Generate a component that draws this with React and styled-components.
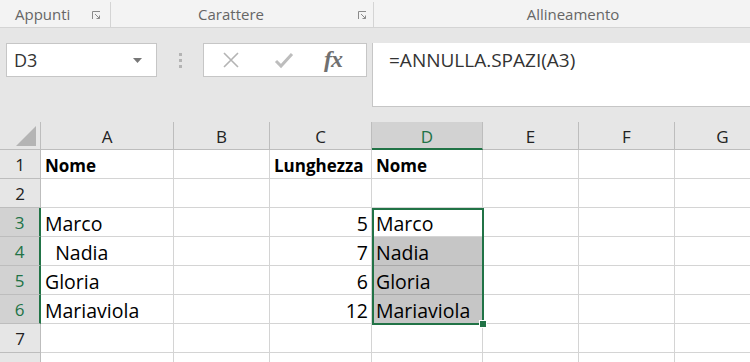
import React from 'react'
import styled, { createGlobalStyle } from 'styled-components'

const GlobalStyle = createGlobalStyle`
    html, body {
        margin: 0;
        padding: 0;
        background: #e6e6e6;
        overflow: hidden;
    }
    #root {
        width: 750px;
        height: 362px;
        overflow: hidden;
    }
`;

const green = '#217346';
const uiFont = `"Open Sans", "Noto Sans", "DejaVu Sans", sans-serif`;
const cellFont = `"Open Sans", "Noto Sans", "Liberation Sans", sans-serif`;

const cols = [41, 133, 96, 102, 111, 96, 96, 96];
const letters = ['A', 'B', 'C', 'D', 'E', 'F', 'G'];

const Page = styled.div`
    width: 750px;
    height: 362px;
    display: flex;
    flex-direction: column;
    background: #e6e6e6;
    overflow: hidden;
    & > * {
        flex: none;
    }
`;

const Ribbon = styled.div`
    height: 27px;
    display: flex;
    background: #f3f3f3;
    border-bottom: 1px solid #d4d4d4;
`;

const Group = styled.div`
    width: ${p => p.$w}px;
    flex: none;
    display: flex;
    align-items: center;
    justify-content: ${p => p.$left ? 'flex-start' : 'center'};
    padding-left: ${p => p.$pl || 0}px;
    padding-right: ${p => p.$pr || 0}px;
    box-sizing: border-box;
    position: relative;
    border-right: ${p => p.$sep ? '1px solid #d4d4d4' : 'none'};
    height: 25px;
    margin-top: 2px;
`;

const GroupLabel = styled.span`
    font-family: ${uiFont};
    font-size: 15px;
    color: #666;
    padding-bottom: 1px;
`;

const Launcher = styled.svg`
    position: absolute;
    right: ${p => p.$r}px;
    top: 9px;
`;

const FormulaBar = styled.div`
    display: flex;
    padding: 15px 0 0 6px;
    height: 79px;
    box-sizing: border-box;
`;

const NameBox = styled.div`
    width: 151px;
    height: 34px;
    box-sizing: border-box;
    background: #fff;
    border: 1px solid #c6c6c6;
    display: flex;
    align-items: center;
    justify-content: space-between;
    padding: 0 14px 0 7px;
    font-family: ${uiFont};
    font-size: 18px;
    color: #333;
`;

const Dots = styled.div`
    width: 46px;
    height: 34px;
    display: flex;
    flex-direction: column;
    align-items: center;
    justify-content: center;
    gap: 3px;
    span {
        width: 3px;
        height: 3px;
        background: #b4b4b4;
    }
`;

const FxBox = styled.div`
    width: 164px;
    height: 34px;
    box-sizing: border-box;
    background: #fff;
    border: 1px solid #c6c6c6;
    display: flex;
    align-items: center;
    padding-left: 18px;
    gap: 34px;
`;

const Fx = styled.span`
    font-family: "Liberation Serif", "DejaVu Serif", serif;
    font-style: italic;
    font-weight: 700;
    font-size: 24px;
    color: #707070;
    letter-spacing: -1px;
    margin-left: -4px;
    margin-top: -2px;
`;

const FormulaInput = styled.div`
    margin-left: 5px;
    flex: 1;
    height: 64px;
    box-sizing: border-box;
    background: #fff;
    border-left: 1px solid #c6c6c6;
    border-bottom: 1px solid #c6c6c6;
    padding: 4px 0 0 16px;
    font-family: ${uiFont};
    font-size: 19px;
    color: #333;
`;

const Sheet = styled.div`
    margin-top: 15px;
    display: grid;
    grid-template-columns: ${cols.map(c => c + 'px').join(' ')};
    grid-template-rows: 28px repeat(8, 29px);
    position: relative;
    background: #fff;
`;

const Corner = styled.div`
    background: #e6e6e6;
    border-right: 1px solid #bdbdbd;
    border-bottom: 1px solid #bdbdbd;
    position: relative;
    svg {
        position: absolute;
        right: 4px;
        bottom: 3px;
    }
`;

const ColHead = styled.div`
    background: ${p => p.$sel ? '#d2d2d2' : '#e6e6e6'};
    border-right: 1px solid #bdbdbd;
    border-bottom: ${p => p.$sel ? `2px solid ${green}` : '1px solid #bdbdbd'};
    display: flex;
    align-items: center;
    justify-content: center;
    font-family: ${cellFont};
    font-size: 17px;
    color: ${p => p.$sel ? green : '#222'};
    padding-top: 2px;
`;

const RowHead = styled.div`
    background: ${p => p.$sel ? '#d2d2d2' : '#e6e6e6'};
    border-right: ${p => p.$sel ? `2px solid ${green}` : '1px solid #bdbdbd'};
    border-bottom: 1px solid #bdbdbd;
    display: flex;
    align-items: center;
    justify-content: center;
    font-family: ${cellFont};
    font-size: 17px;
    color: ${p => p.$sel ? green : '#222'};
`;

const Cell = styled.div`
    background: ${p => p.$fill ? '#c6c6c6' : '#fff'};
    border-right: 1px solid #d4d4d4;
    border-bottom: 1px solid ${p => p.$fill ? '#a8a8a8' : '#d4d4d4'};
    display: flex;
    align-items: flex-end;
    justify-content: ${p => p.$num ? 'flex-end' : 'flex-start'};
    padding: 0 3px 2px 4px;
    font-family: ${cellFont};
    font-size: ${p => p.$bold ? 17 : 19.5}px;
    line-height: 20px;
    font-weight: ${p => p.$bold ? 700 : 400};
    color: #000;
    white-space: pre;
    min-width: 0;
`;

const Selection = styled.div`
    position: absolute;
    left: 372px;
    top: 86px;
    width: 112px;
    height: 117px;
    box-sizing: border-box;
    border: 2px solid ${green};
    pointer-events: none;
`;

const Handle = styled.div`
    position: absolute;
    left: 479px;
    top: 198px;
    width: 8px;
    height: 8px;
    box-sizing: border-box;
    background: ${green};
    border: 1px solid #fff;
`;

const data = [
    [{ t: 'Nome', b: true }, {}, { t: 'Lunghezza', b: true }, { t: 'Nome', b: true }],
    [],
    [{ t: 'Marco' }, {}, { t: '5', n: true }, { t: 'Marco' }],
    [{ t: '  Nadia' }, {}, { t: '7', n: true }, { t: 'Nadia', f: true }],
    [{ t: 'Gloria' }, {}, { t: '6', n: true }, { t: 'Gloria', f: true }],
    [{ t: 'Mariaviola' }, {}, { t: '12', n: true }, { t: 'Mariaviola', f: true }],
    [],
    [],
];

function LauncherIcon({ right }) {
    return (
        <Launcher $r={right} width="9" height="9" viewBox="0 0 9 9">
            <path d="M0.5 8V0.5H8" fill="none" stroke="#8a8a8a" />
            <path d="M3 3L7.5 7.5M7.5 4.5V7.5H4.5" fill="none" stroke="#8a8a8a" />
        </Launcher>
    );
}

export default function App() {
    return (
        <Page>
            <GlobalStyle />
            <Ribbon>
                <Group $w={111} $left $pl={15} $sep>
                    <GroupLabel>Appunti</GroupLabel>
                    <LauncherIcon right={9} />
                </Group>
                <Group $w={263} $pr={22} $sep>
                    <GroupLabel>Carattere</GroupLabel>
                    <LauncherIcon right={6} />
                </Group>
                <Group $w={376} $pl={22}>
                    <GroupLabel>Allineamento</GroupLabel>
                </Group>
            </Ribbon>
            <FormulaBar>
                <NameBox>
                    <span>D3</span>
                    <svg width="9" height="5" viewBox="0 0 9 5">
                        <path d="M0 0H9L4.5 5Z" fill="#777" />
                    </svg>
                </NameBox>
                <Dots><span /><span /><span /></Dots>
                <FxBox>
                    <svg width="18" height="18" viewBox="0 0 18 18">
                        <path d="M2 2L16 16M16 2L2 16" stroke="#b4b4b4" strokeWidth="1.6" />
                    </svg>
                    <svg width="20" height="18" viewBox="0 0 20 18">
                        <path d="M2 10L7 15L18 3" fill="none" stroke="#bdbdbd" strokeWidth="3" />
                    </svg>
                    <Fx>fx</Fx>
                </FxBox>
                <FormulaInput>=ANNULLA.SPAZI(A3)</FormulaInput>
            </FormulaBar>
            <Sheet>
                <Corner>
                    <svg width="20" height="20" viewBox="0 0 20 20">
                        <path d="M20 0V20H0Z" fill="#b4b4b4" />
                    </svg>
                </Corner>
                {letters.map(l => (
                    <ColHead key={l} $sel={l === 'D'}>{l}</ColHead>
                ))}
                {data.map((row, r) => (
                    <React.Fragment key={r}>
                        <RowHead $sel={r >= 2 && r <= 5}>{r < 7 ? r + 1 : ''}</RowHead>
                        {letters.map((l, c) => {
                            const cell = row[c] || {};
                            return (
                                <Cell key={l} $bold={cell.b} $num={cell.n} $fill={cell.f}>
                                    {cell.t || ''}
                                </Cell>
                            );
                        })}
                    </React.Fragment>
                ))}
                <Selection />
                <Handle />
            </Sheet>
        </Page>
    );
}
